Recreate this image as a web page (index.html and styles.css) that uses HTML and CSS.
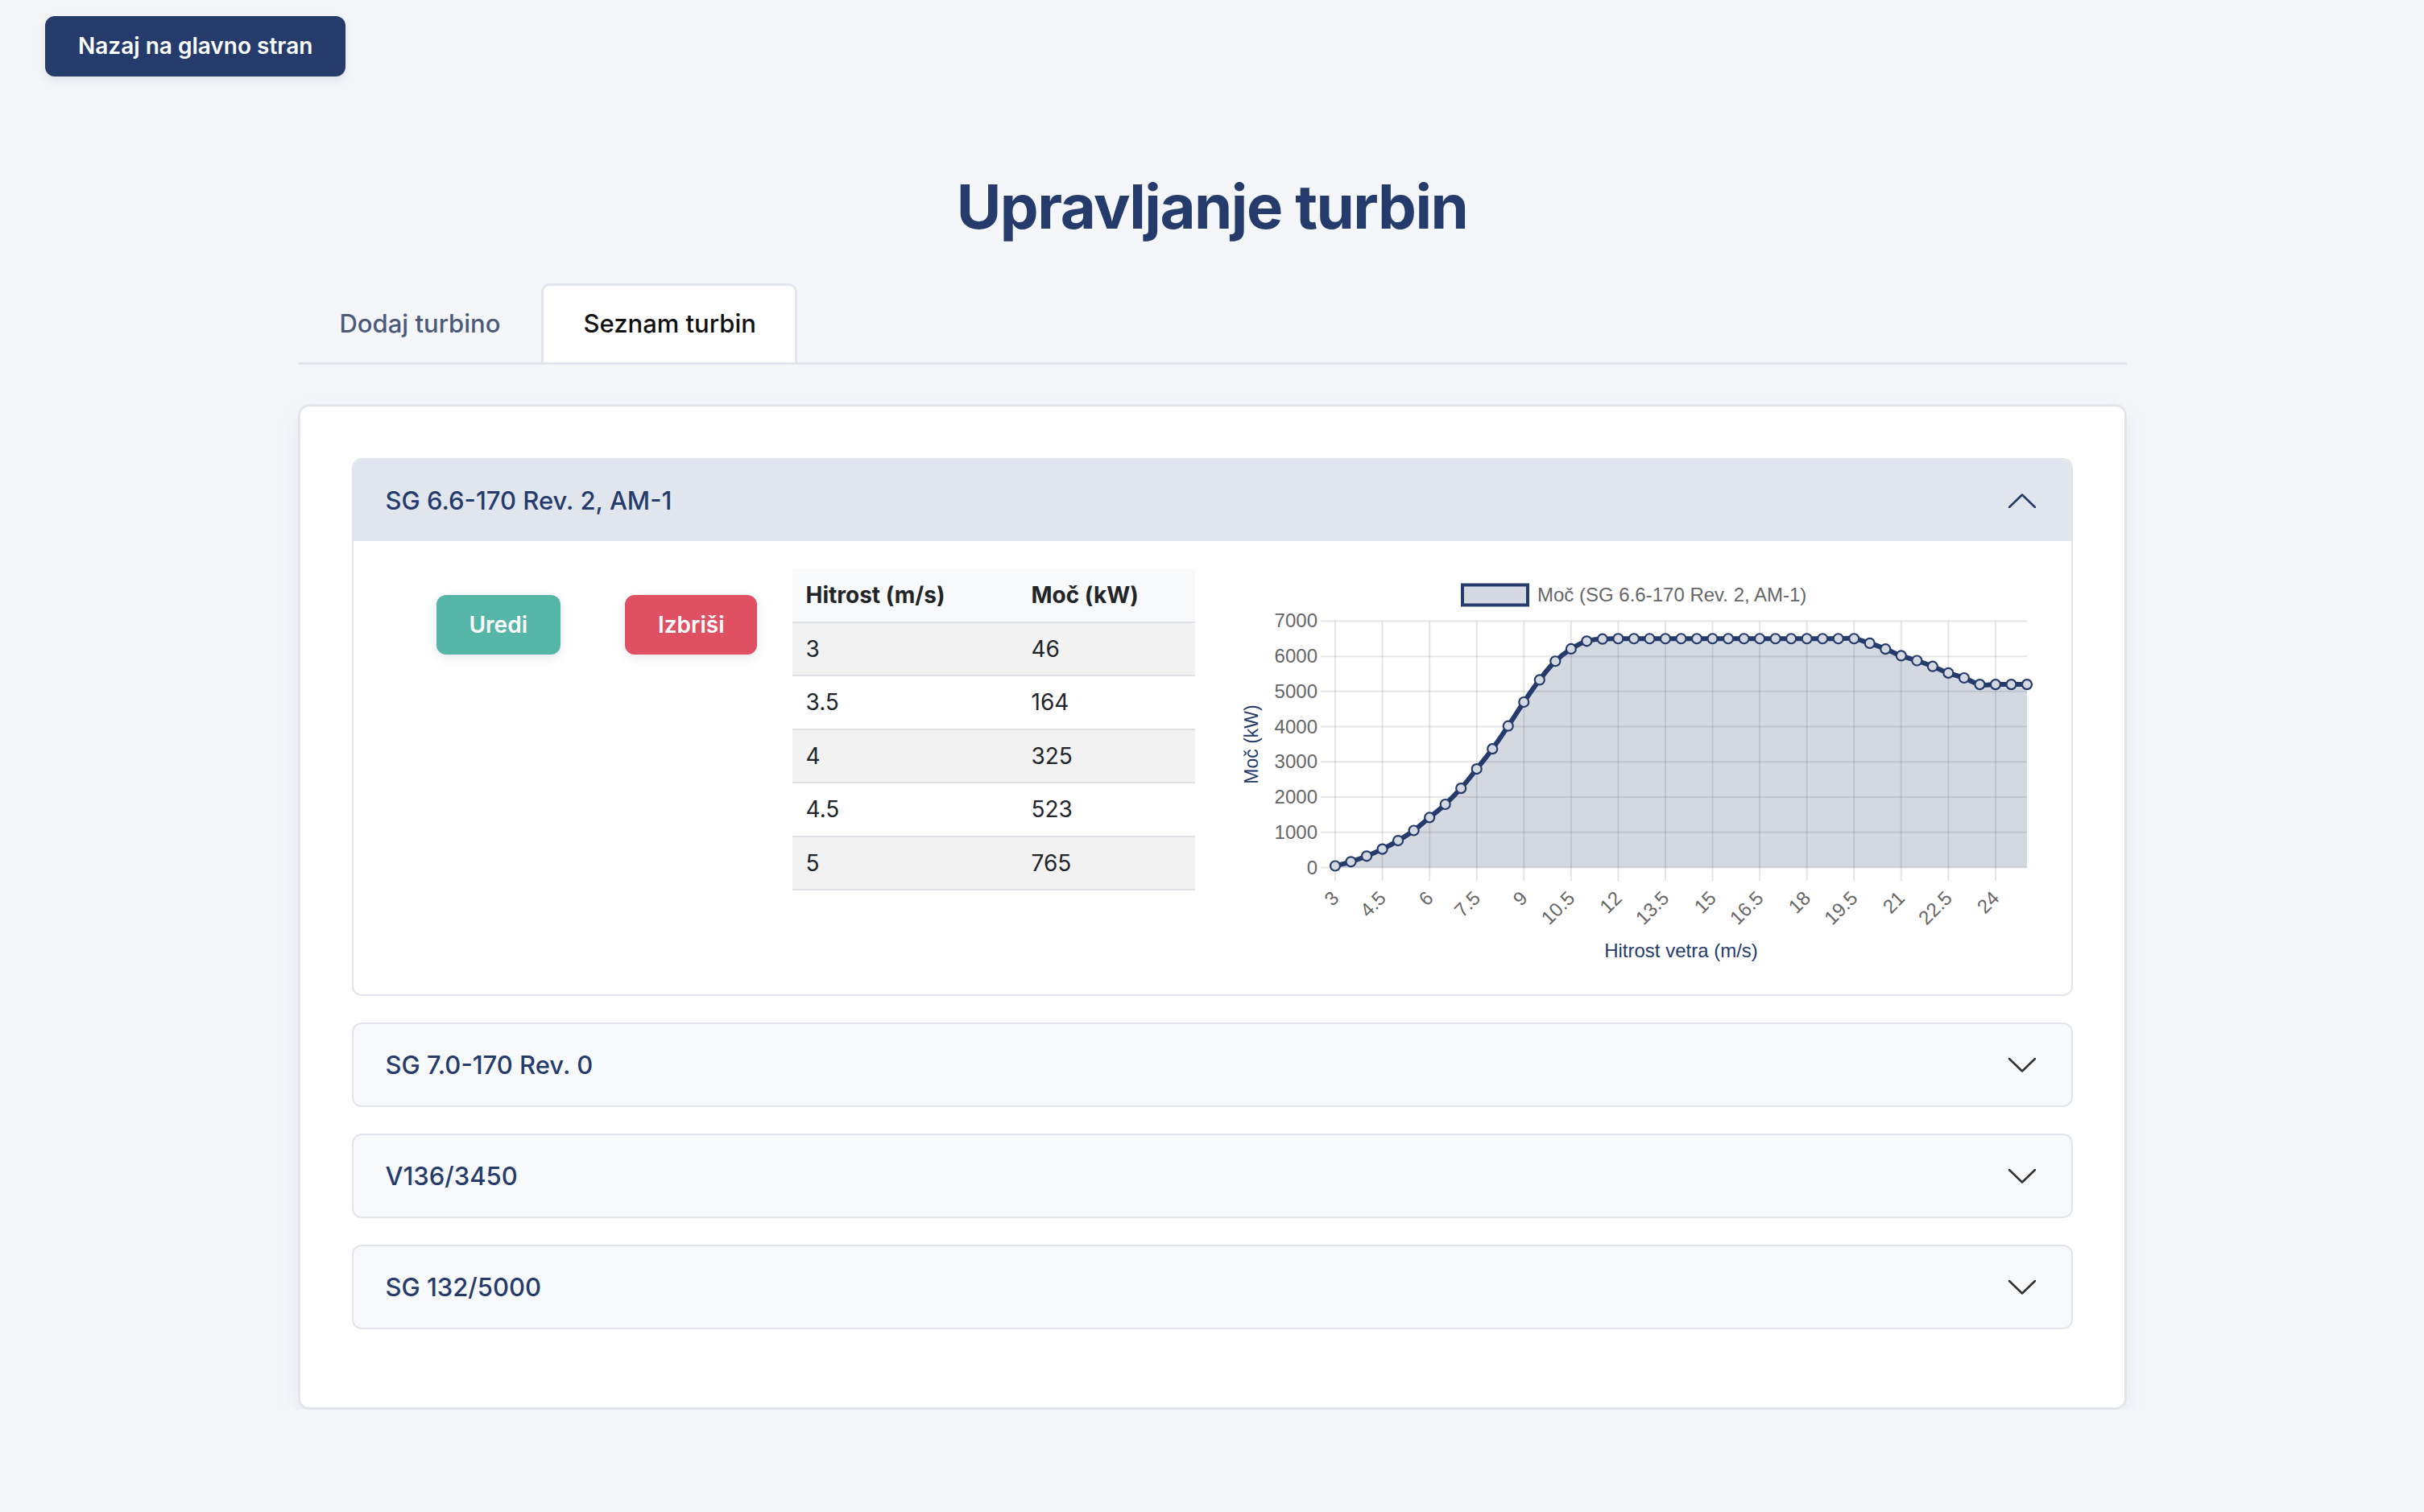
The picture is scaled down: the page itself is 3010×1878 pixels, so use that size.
FILE: index.html
```html
<!DOCTYPE html>
<html lang="sl">
<head>
<meta charset="utf-8">
<title>Upravljanje turbin</title>
<link rel="stylesheet" href="styles.css">
</head>
<body>
<header class="topbar">
  <button class="btn btn-primary">Nazaj na glavno stran</button>
</header>
<main class="container">
  <h1 class="page-title">Upravljanje turbin</h1>
  <nav class="tabs">
    <button class="tab">Dodaj turbino</button>
    <button class="tab active">Seznam turbin</button>
  </nav>
  <section class="card">
    <div class="acc-item open">
      <div class="acc-header">
        <span>SG 6.6-170 Rev. 2, AM-1</span>
        <svg class="chev chev-up" width="34" height="18" viewBox="0 0 34 18"><path d="M1 17 L17 1.5 L33 17"/></svg>
      </div>
      <div class="acc-body">
        <div class="actions">
          <button class="btn btn-edit">Uredi</button>
          <button class="btn btn-delete">Izbriši</button>
        </div>
        <table class="power-table">
          <thead>
            <tr><th class="col-speed">Hitrost (m/s)</th><th>Moč (kW)</th></tr>
          </thead>
          <tbody>
            <tr><td>3</td><td>46</td></tr>
            <tr><td>3.5</td><td>164</td></tr>
            <tr><td>4</td><td>325</td></tr>
            <tr><td>4.5</td><td>523</td></tr>
            <tr><td>5</td><td>765</td></tr>
          </tbody>
        </table>
        <div class="chart">
          <svg id="chart" width="1010" height="493" viewBox="0 0 1010 493"></svg>
        </div>
      </div>
    </div>
    <div class="acc-item">
      <div class="acc-header">
        <span>SG 7.0-170 Rev. 0</span>
        <svg class="chev chev-down" width="34" height="18" viewBox="0 0 34 18"><path d="M1 1 L17 16.5 L33 1"/></svg>
      </div>
    </div>
    <div class="acc-item">
      <div class="acc-header">
        <span>V136/3450</span>
        <svg class="chev chev-down" width="34" height="18" viewBox="0 0 34 18"><path d="M1 1 L17 16.5 L33 1"/></svg>
      </div>
    </div>
    <div class="acc-item">
      <div class="acc-header">
        <span>SG 132/5000</span>
        <svg class="chev chev-down" width="34" height="18" viewBox="0 0 34 18"><path d="M1 1 L17 16.5 L33 1"/></svg>
      </div>
    </div>
  </section>
</main>
<script src="script.js"></script>
</body>
</html>
```

FILE: styles.css
```css
* { box-sizing: border-box; }

body {
  margin: 0;
  background: #f5f6fa;
  font-family: Inter, "Noto Sans", sans-serif;
  color: #212529;
}

.topbar {
  padding: 20px 56px 0;
}

.btn {
  font-family: inherit;
  font-size: 28px;
  font-weight: 600;
  color: #fff;
  border: none;
  border-radius: 12px;
  padding: 0 41px;
  height: 75px;
  line-height: 75px;
  box-shadow: 0 4px 12px rgba(20, 30, 60, 0.10);
  cursor: pointer;
}

.btn-primary { background: #243b6b; }
.btn-edit { background: #55b6a8; height: 74px; line-height: 74px; }
.btn-delete { background: #e05063; height: 74px; line-height: 74px; }

.container {
  width: 2271px;
  margin: 0 auto;
}

.page-title {
  margin: 115px 0 0;
  font-size: 76px;
  line-height: 92px;
  font-weight: 700;
  color: #243b6b;
  text-align: center;
  letter-spacing: -1.5px;
}

.tabs {
  display: flex;
  margin-top: 50px;
  border-bottom: 3px solid #e2e6ec;
}

.tab {
  font-family: inherit;
  font-size: 31px;
  font-weight: 500;
  color: #4b5a78;
  background: none;
  border: 3px solid transparent;
  border-bottom: none;
  padding: 23px 48px 24px 49px;
  line-height: 48px;
  border-radius: 10px 10px 0 0;
  cursor: pointer;
}

.tab.active {
  background: #fff;
  border-color: #e2e6ec;
  color: #111;
}

.card {
  margin-top: 49px;
  background: #fff;
  border: 3px solid #e2e6ec;
  border-radius: 14px;
  padding: 64px;
  box-shadow: 0 10px 30px rgba(30, 40, 70, 0.06);
}

.acc-item {
  border: 2px solid #e2e6ec;
  border-radius: 12px;
  margin-bottom: 33px;
  background: #f8f9fb;
  overflow: hidden;
}

.acc-item.open { background: #fff; }

.acc-header {
  display: flex;
  justify-content: space-between;
  align-items: center;
  padding: 32px 44px 32px 40px;
  font-size: 31px;
  font-weight: 500;
  line-height: 37px;
  color: #243b6b;
}

.acc-item.open .acc-header { background: #e1e6ee; }

.chev path {
  fill: none;
  stroke-width: 2.6;
  stroke-linecap: round;
  stroke-linejoin: round;
}
.chev-up path { stroke: #243b6b; }
.chev-down path { stroke: #333; }

.acc-body {
  display: flex;
  align-items: flex-start;
  padding: 35px 0 35px 0;
}

.actions {
  width: 545px;
  flex: none;
  display: flex;
  gap: 80px;
  padding: 32px 0 0 103px;
}

.power-table {
  width: 500px;
  flex: none;
  border-collapse: collapse;
  font-size: 28px;
  color: #212529;
}

.power-table th,
.power-table td {
  text-align: left;
  padding: 16px 17px;
  line-height: 32.5px;
  border-bottom: 2px solid #dee2e6;
}

.power-table th {
  font-weight: 700;
  background: #f8f9fa;
}

.power-table .col-speed { width: 280px; }

.power-table tbody tr:nth-child(odd) td { background: #f2f2f2; }

.chart {
  margin-left: 46px;
  width: 1010px;
  flex: none;
}

.chart svg { display: block; }

.grid {
  stroke: rgba(0, 0, 0, 0.1);
  stroke-width: 2;
}

.tick {
  font-family: "Liberation Sans", Arial, sans-serif;
  font-size: 24px;
  fill: #666;
}

.axis-title {
  font-family: "Liberation Sans", Arial, sans-serif;
  font-size: 24px;
  fill: #243b6b;
}

.axis-title.y { font-size: 23px; }

.legend-box {
  fill: #d3d8e1;
  stroke: #243b6b;
  stroke-width: 4;
}

.area { fill: rgba(36, 59, 107, 0.2); stroke: none; }

.curve {
  fill: none;
  stroke: #243b6b;
  stroke-width: 6;
  stroke-linejoin: round;
}

.pt {
  fill: #d3d8e1;
  stroke: #243b6b;
  stroke-width: 2.2;
}
```

FILE: script.js
```js
(function () {
  var svg = document.getElementById('chart');
  var NS = 'http://www.w3.org/2000/svg';
  var L = 128, R = 987, T = 64.4, B = 370.5, MAX = 7000;
  var power = [46, 164, 325, 523, 765, 1052, 1420, 1795, 2250, 2800, 3370, 4020, 4700, 5330, 5860, 6210, 6430, 6490,
    6500, 6500, 6500, 6500, 6500, 6500, 6500, 6500, 6500, 6500, 6500, 6500, 6500, 6500, 6500, 6500,
    6370, 6205, 6016, 5877, 5713, 5525, 5385, 5200, 5200, 5200, 5200];
  var n = power.length;
  var step = (R - L) / (n - 1);
  function X(i) { return L + i * step; }
  function Y(v) { return B - v / MAX * (B - T); }
  function el(tag, attrs, text) {
    var e = document.createElementNS(NS, tag);
    for (var k in attrs) e.setAttribute(k, attrs[k]);
    if (text !== undefined) e.textContent = text;
    svg.appendChild(e);
    return e;
  }

  // legend
  el('rect', { x: 286, y: 19.5, width: 81, height: 25, 'class': 'legend-box' });
  el('text', { x: 379, y: 40, 'class': 'tick' }, 'Moč (SG 6.6-170 Rev. 2, AM-1)');

  // horizontal grid + y ticks
  for (var v = 0; v <= MAX; v += 1000) {
    var y = Y(v);
    el('line', { x1: 110, x2: R, y1: y, y2: y, 'class': 'grid' });
    el('text', { x: 106, y: y + 8, 'text-anchor': 'end', 'class': 'tick' }, String(v));
  }
  // vertical grid + x ticks
  for (var i = 0; i < n; i += 3) {
    var x = X(i);
    el('line', { x1: x, x2: x, y1: T, y2: 387, 'class': 'grid' });
    el('text', { transform: 'translate(' + (x + 6) + ' 410) rotate(-45)', 'text-anchor': 'end', 'class': 'tick' }, String(3 + i * 0.5));
  }

  // axis titles
  el('text', { x: (L + R) / 2, y: 482, 'text-anchor': 'middle', 'class': 'axis-title' }, 'Hitrost vetra (m/s)');
  el('text', { transform: 'translate(32 ' + (T + B) / 2 + ') rotate(-90)', 'text-anchor': 'middle', 'class': 'axis-title y' }, 'Moč (kW)');

  // spline
  var pts = power.map(function (p, i) { return { x: X(i), y: Y(p) }; });
  var t = 0.4;
  var cps = pts.map(function (cur, i) {
    var prev = pts[i - 1] || cur;
    var next = pts[i + 1] || cur;
    var d01 = Math.hypot(cur.x - prev.x, cur.y - prev.y);
    var d12 = Math.hypot(next.x - cur.x, next.y - cur.y);
    var s01 = d01 / (d01 + d12) || 0;
    var s12 = d12 / (d01 + d12) || 0;
    var fa = t * s01, fb = t * s12;
    function cap(yv) { return Math.max(T, Math.min(B, yv)); }
    return {
      prev: { x: cur.x - fa * (next.x - prev.x), y: cap(cur.y - fa * (next.y - prev.y)) },
      next: { x: cur.x + fb * (next.x - prev.x), y: cap(cur.y + fb * (next.y - prev.y)) }
    };
  });
  var d = 'M' + pts[0].x.toFixed(2) + ',' + pts[0].y.toFixed(2);
  for (var j = 1; j < n; j++) {
    var a = cps[j - 1].next, b = cps[j].prev, p = pts[j];
    d += ' C' + a.x.toFixed(2) + ',' + a.y.toFixed(2) + ' ' + b.x.toFixed(2) + ',' + b.y.toFixed(2) + ' ' + p.x.toFixed(2) + ',' + p.y.toFixed(2);
  }
  el('path', { d: d + ' L' + R + ',' + B + ' L' + L + ',' + B + ' Z', 'class': 'area' });
  el('path', { d: d, 'class': 'curve' });
  pts.forEach(function (p) {
    el('circle', { cx: p.x.toFixed(2), cy: p.y.toFixed(2), r: 6, 'class': 'pt' });
  });
})();
```
